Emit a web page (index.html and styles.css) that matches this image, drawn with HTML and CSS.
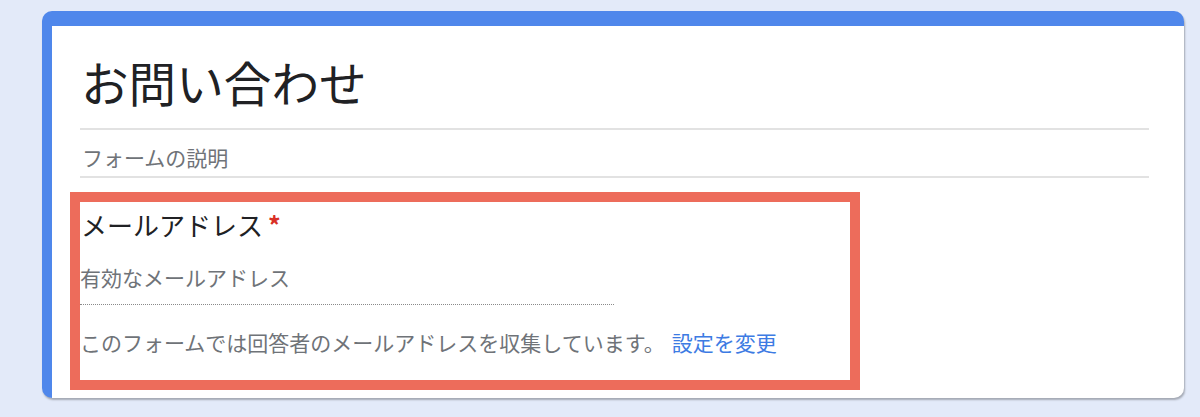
FILE: index.html
```html
<!DOCTYPE html>
<html lang="ja">
<head>
<meta charset="utf-8">
<title>お問い合わせ</title>
<link rel="stylesheet" href="styles.css">
</head>
<body>
<div class="card">
  <div class="title-block">
    <h1 class="title">お問い合わせ</h1>
  </div>
  <div class="desc-block">
    <p class="desc">フォームの説明</p>
  </div>
  <div class="question">
    <div class="q-label">メールアドレス<span class="req">*</span></div>
    <div class="q-input">有効なメールアドレス</div>
    <div class="q-note">このフォームでは回答者のメールアドレスを収集しています。<a class="q-link" href="#">設定を変更</a></div>
  </div>
</div>
</body>
</html>
```
FILE: styles.css
```css
html, body {
  margin: 0;
  padding: 0;
}
body {
  background: #e3eaf9;
  font-family: "Noto Sans CJK JP", "Noto Sans", sans-serif;
  height: 417px;
  overflow: hidden;
}
.card {
  margin: 11px 0 0 42px;
  width: 1069px;
  height: 372px;
  background: #ffffff;
  border-top: 15px solid #4f87eb;
  border-left: 10px solid #4f87eb;
  border-radius: 10px;
  box-shadow: 1px 2px 2px rgba(0, 0, 0, 0.28);
  padding: 0 35px 0 28px;
  box-sizing: content-box;
}
.title-block {
  height: 104px;
  border-bottom: 2px solid #e2e2e2;
  box-sizing: border-box;
}
.title {
  margin: 0;
  padding: 28px 0 0 1px;
  font-size: 47.6px;
  font-weight: 400;
  line-height: 56px;
  color: #202124;
}
.desc-block {
  height: 48px;
  border-bottom: 2px solid #e2e2e2;
  box-sizing: border-box;
}
.desc {
  margin: 0;
  padding: 13px 0 0 2px;
  font-size: 21px;
  line-height: 28px;
  color: #6f7378;
}
.question {
  margin: 14px 0 0 -10px;
  width: 790px;
  height: 198px;
  border: 10px solid #ed6c5b;
  box-sizing: border-box;
  padding: 7px 0 0 0;
}
.q-label {
  font-size: 26px;
  line-height: 32px;
  color: #202124;
  padding-left: 1px;
}
.req {
  color: #d93025;
  font-size: 25px;
  font-weight: 700;
  line-height: 1;
  margin-left: 5px;
  vertical-align: 1px;
}
.q-input {
  margin-top: 22px;
  width: 534px;
  font-size: 21px;
  line-height: 28px;
  color: #6f7378;
  padding-bottom: 13px;
  border-bottom: 1px dotted #8a8a8a;
}
.q-note {
  margin-top: 23px;
  font-size: 21px;
  line-height: 28px;
  color: #6f7378;
}
.q-link {
  color: #3d7be3;
  text-decoration: none;
  margin-left: 7px;
}
```
